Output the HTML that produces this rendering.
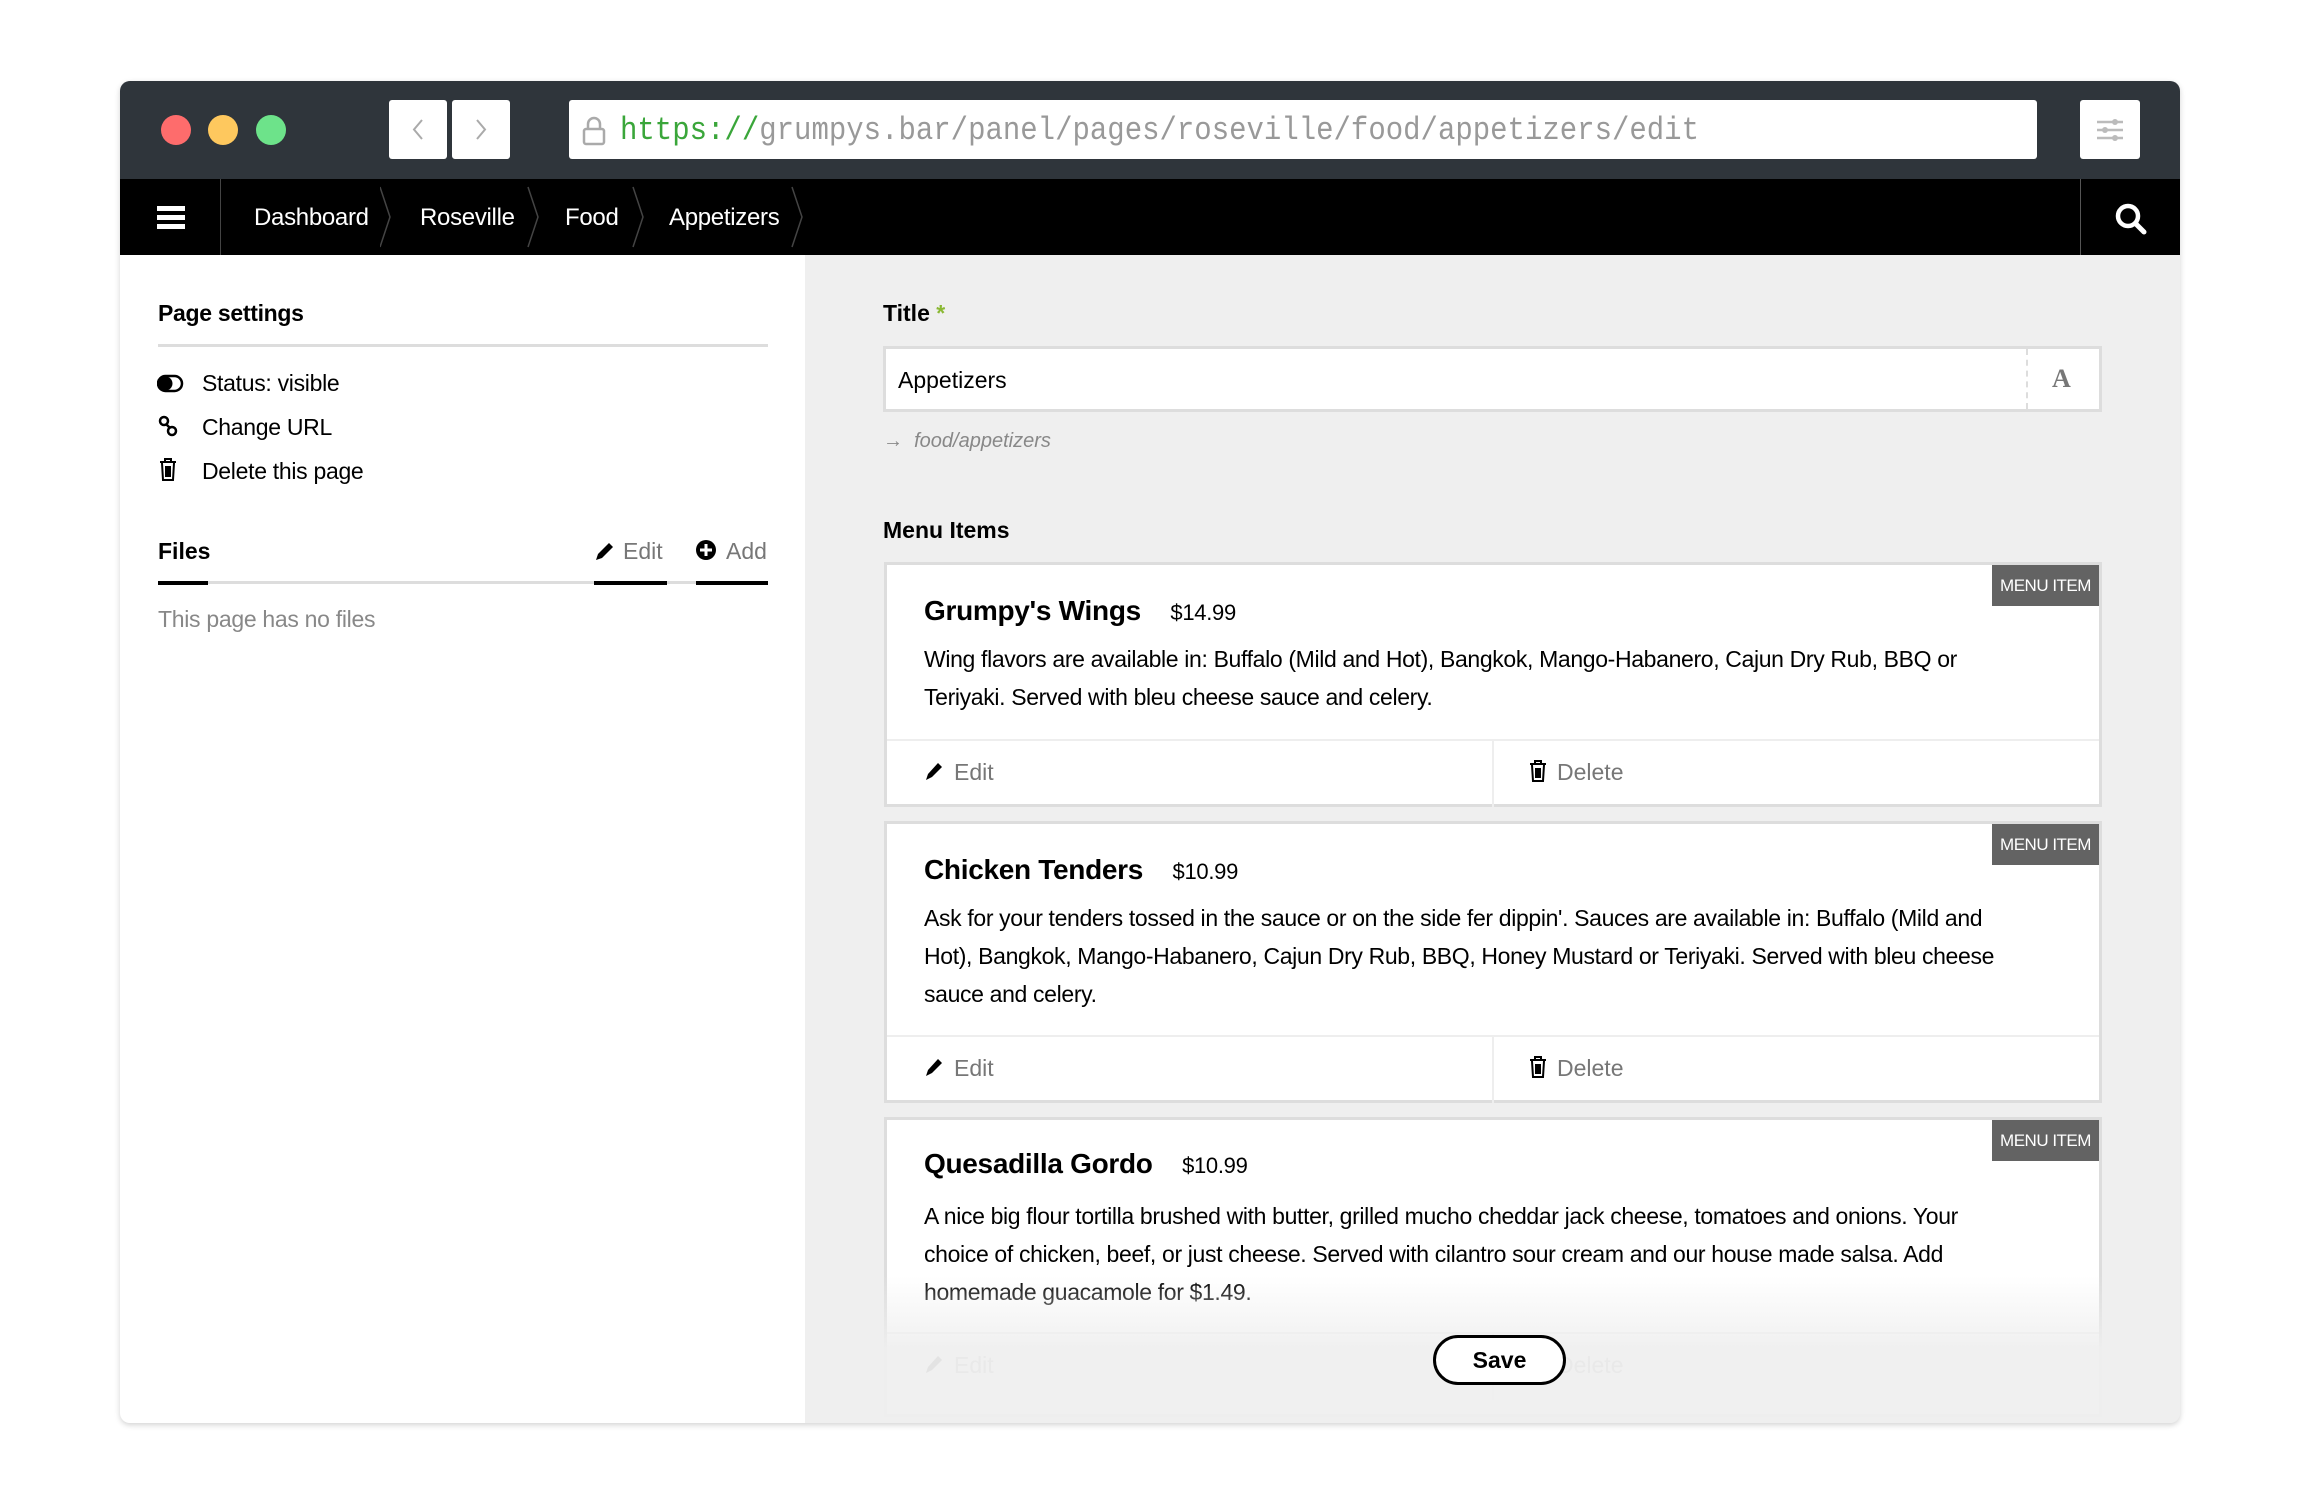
<!DOCTYPE html>
<html><head><meta charset="utf-8"><style>
*{box-sizing:border-box;margin:0;padding:0}
body{width:2300px;height:1504px;background:#fff;font-family:"Liberation Sans",sans-serif;position:relative;overflow:hidden;color:#000}
.abs{position:absolute}
.win{left:120px;top:81px;width:2060px;height:1342px;border-radius:10px;overflow:hidden;box-shadow:0 2px 6px rgba(0,0,0,.18);background:#efefef}
.tb{left:0;top:0;width:2060px;height:98px;background:#2f353b}
.dot{width:30px;height:30px;border-radius:50%;top:34px}
.btn{background:#fff;border-radius:3px;top:19px;height:59px;width:58px}
.nav{left:0;top:98px;width:2060px;height:76px;background:#000}
.crumb{top:98px;height:76px;line-height:78px;color:#fff;font-size:24px;letter-spacing:-.3px}
.left{left:0;top:174px;width:685px;height:1168px;background:#fff}
.card{background:#fff;border:3px solid #ddd;left:764px;width:1218px}
.badge{background:#636363;color:#fff;font-size:17px;line-height:41px;text-align:center;width:107px;height:41px;right:0;top:0;letter-spacing:-.5px}
.ct{font-size:28px;font-weight:bold;left:37px;letter-spacing:-.3px}
.pr{font-size:22px}
.desc{left:37px;font-size:23px;line-height:38px;white-space:nowrap;letter-spacing:-.35px}
.foot{left:0;right:0;height:66px;border-top:2px solid #eee;font-size:23px;color:#777}
.ic{display:inline-block;vertical-align:-2px;margin-right:10px}
</style></head><body>
<div class="abs win">
 <div class="abs tb"></div>
 <div class="abs dot" style="left:41px;background:#fe6c6c"></div>
 <div class="abs dot" style="left:88px;background:#fec85e"></div>
 <div class="abs dot" style="left:136px;background:#6de38a"></div>
 <div class="abs btn" style="left:269px"><svg width="58" height="59"><path d="M33 20l-8 9.5 8 9.5" stroke="#aaa" stroke-width="2" fill="none"/></svg></div>
 <div class="abs btn" style="left:332px"><svg width="58" height="59"><path d="M25 20l8 9.5-8 9.5" stroke="#aaa" stroke-width="2" fill="none"/></svg></div>
 <div class="abs" style="left:449px;top:19px;width:1468px;height:59px;background:#fff;border-radius:3px"></div>
 <svg class="abs" style="left:460px;top:34px" width="28" height="32"><path d="M8 14V9a6 6 0 0 1 12 0v5" stroke="#aaa" stroke-width="2.5" fill="none"/><rect x="4" y="14" width="20" height="15" rx="2" stroke="#aaa" stroke-width="2.5" fill="none"/></svg>
 <div class="abs" style="left:500px;top:29px;font-family:'Liberation Mono',monospace;font-size:29px;line-height:42px;color:#999;white-space:nowrap;transform:scaleY(1.12);transform-origin:left center"><span style="color:#3aa63a">https://</span>grumpys.bar/panel/pages/roseville/food/appetizers/edit</div>
 <div class="abs btn" style="left:1960px;width:60px"><svg width="60" height="59"><g stroke="#bbb" stroke-width="2.5"><path d="M17 22h26M17 30h26M17 38h26"/></g><g fill="#bbb"><circle cx="35" cy="22" r="3"/><circle cx="25" cy="30" r="3"/><circle cx="35" cy="38" r="3"/></g></svg></div>
 <div class="abs nav"></div>
 <svg class="abs" style="left:37px;top:125px" width="28" height="24"><g fill="#fff"><rect y="0" width="28" height="5"/><rect y="9" width="28" height="5"/><rect y="18" width="28" height="5"/></g></svg>
 <div class="abs" style="left:100px;top:98px;width:1px;height:76px;background:#444"></div>
 <div class="abs crumb" style="left:134px">Dashboard</div>
 <div class="abs crumb" style="left:300px">Roseville</div>
 <div class="abs crumb" style="left:445px">Food</div>
 <div class="abs crumb" style="left:549px">Appetizers</div>
 <svg class="abs" style="left:260px;top:98px" width="600" height="76"><g stroke="#444" stroke-width="1.5" fill="none"><path d="M0 8l10 30-10 30"/><path d="M148 8l10 30-10 30"/><path d="M253 8l10 30-10 30"/><path d="M412 8l10 30-10 30"/></g></svg>
 <div class="abs" style="left:1960px;top:98px;width:1px;height:76px;background:#555"></div>
 <svg class="abs" style="left:1995px;top:122px" width="34" height="34"><circle cx="13" cy="13" r="10" stroke="#fff" stroke-width="4.5" fill="none"/><path d="M21 21l8 8" stroke="#fff" stroke-width="5" stroke-linecap="round"/></svg>

 <div class="abs left"></div>
 <div class="abs" style="left:38px;top:219px;font-size:23px;font-weight:bold;letter-spacing:-.3px">Page settings</div>
 <div class="abs" style="left:38px;top:263px;width:610px;height:3px;background:#ddd"></div>
 <svg class="abs" style="left:37px;top:292px" width="28" height="24"><rect x="1" y="3" width="24" height="15" rx="7.5" stroke="#000" stroke-width="2.5" fill="none"/><circle cx="8.5" cy="10.5" r="7" fill="#000"/></svg>
 <div class="abs" style="left:82px;top:289px;font-size:23px;letter-spacing:-.3px">Status: visible</div>
 <svg class="abs" style="left:38px;top:333px" width="22" height="26"><g stroke="#000" stroke-width="2.5" fill="none"><circle cx="6" cy="7" r="4"/><circle cx="14" cy="17" r="4"/><path d="M8 10l4 4"/></g></svg>
 <div class="abs" style="left:82px;top:333px;font-size:23px;letter-spacing:-.3px">Change URL</div>
 <svg class="abs" style="left:39px;top:377px" width="18" height="24"><g stroke="#000" stroke-width="2" fill="none"><path d="M1 4h16M6 4V1h6v3M3 5l1 17h10l1-17M7 8v11M9 8v11M11 8v11"/></g></svg>
 <div class="abs" style="left:82px;top:377px;font-size:23px;letter-spacing:-.3px">Delete this page</div>
 <div class="abs" style="left:38px;top:457px;font-size:23px;font-weight:bold">Files</div>
 <svg class="abs" style="left:473px;top:459px" width="22" height="24"><path d="M3 20l2-6L16 3l4 4L9 18z M3 20l5-1" fill="#000"/></svg>
 <div class="abs" style="left:503px;top:457px;font-size:23px;color:#777">Edit</div>
 <svg class="abs" style="left:575px;top:458px" width="24" height="24"><circle cx="11" cy="11" r="10" fill="#000"/><path d="M11 5v12M5 11h12" stroke="#fff" stroke-width="3"/></svg>
 <div class="abs" style="left:606px;top:457px;font-size:23px;color:#777">Add</div>
 <div class="abs" style="left:38px;top:500px;width:610px;height:3px;background:#ddd"></div>
 <div class="abs" style="left:38px;top:500px;width:50px;height:4px;background:#000"></div>
 <div class="abs" style="left:474px;top:500px;width:73px;height:4px;background:#000"></div>
 <div class="abs" style="left:576px;top:500px;width:72px;height:4px;background:#000"></div>
 <div class="abs" style="left:38px;top:525px;font-size:23px;color:#888;letter-spacing:-.3px">This page has no files</div>

 <div class="abs" style="left:763px;top:219px;font-size:23px;font-weight:bold">Title <span style="color:#8ab833">*</span></div>
 <div class="abs" style="left:763px;top:265px;width:1219px;height:66px;background:#fff;border:3px solid #ddd"></div>
 <div class="abs" style="left:1906px;top:268px;width:0;height:60px;border-left:2px dashed #ddd"></div>
 <div class="abs" style="left:1932px;top:283px;font-family:'Liberation Serif',serif;font-weight:bold;font-size:26px;color:#777">A</div>
 <div class="abs" style="left:778px;top:286px;font-size:23px">Appetizers</div>
 <div class="abs" style="left:763px;top:349px;font-size:20px;color:#888;font-style:italic">→ &nbsp;food/appetizers</div>
 <div class="abs" style="left:763px;top:436px;font-size:23px;font-weight:bold">Menu Items</div>

 <div class="abs card" style="top:481px;height:245px">
  <div class="abs badge">MENU ITEM</div>
  <div class="abs ct" style="top:30px">Grumpy's Wings <span class="pr" style="font-weight:normal;margin-left:22px">$14.99</span></div>
  <div class="abs desc" style="top:75px">Wing flavors are available in: Buffalo (Mild and Hot), Bangkok, Mango-Habanero, Cajun Dry Rub, BBQ or<br>Teriyaki. Served with bleu cheese sauce and celery.</div>
  <div class="abs foot" style="top:174px"><div class="abs" style="left:37px;top:18px"><svg class="ic" width="20" height="22"><path d="M2 20l2-6L14 3l4 4L8 17z" fill="#000"/></svg>Edit</div><div class="abs" style="left:605px;top:0;width:2px;height:66px;background:#eee"></div><div class="abs" style="left:642px;top:18px"><svg class="ic" width="18" height="22"><g stroke="#000" stroke-width="2" fill="none"><path d="M1 4h16M6 4V1h6v3M3 5l1 16h10l1-16M7 8v10M9 8v10M11 8v10"/></g></svg>Delete</div></div>
 </div>
 <div class="abs card" style="top:740px;height:282px">
  <div class="abs badge">MENU ITEM</div>
  <div class="abs ct" style="top:30px">Chicken Tenders <span class="pr" style="font-weight:normal;margin-left:22px">$10.99</span></div>
  <div class="abs desc" style="top:75px">Ask for your tenders tossed in the sauce or on the side fer dippin'. Sauces are available in: Buffalo (Mild and<br>Hot), Bangkok, Mango-Habanero, Cajun Dry Rub, BBQ, Honey Mustard or Teriyaki. Served with bleu cheese<br>sauce and celery.</div>
  <div class="abs foot" style="top:211px"><div class="abs" style="left:37px;top:18px"><svg class="ic" width="20" height="22"><path d="M2 20l2-6L14 3l4 4L8 17z" fill="#000"/></svg>Edit</div><div class="abs" style="left:605px;top:0;width:2px;height:66px;background:#eee"></div><div class="abs" style="left:642px;top:18px"><svg class="ic" width="18" height="22"><g stroke="#000" stroke-width="2" fill="none"><path d="M1 4h16M6 4V1h6v3M3 5l1 16h10l1-16M7 8v10M9 8v10M11 8v10"/></g></svg>Delete</div></div>
 </div>
 <div class="abs card" style="top:1036px;height:300px">
  <div class="abs badge">MENU ITEM</div>
  <div class="abs ct" style="top:28px">Quesadilla Gordo <span class="pr" style="font-weight:normal;margin-left:22px">$10.99</span></div>
  <div class="abs desc" style="top:77px">A nice big flour tortilla brushed with butter, grilled mucho cheddar jack cheese, tomatoes and onions. Your<br>choice of chicken, beef, or just cheese. Served with cilantro sour cream and our house made salsa. Add<br>homemade guacamole for $1.49.</div>
  <div class="abs foot" style="top:212px"><div class="abs" style="left:37px;top:18px"><svg class="ic" width="20" height="22"><path d="M2 20l2-6L14 3l4 4L8 17z" fill="#000"/></svg>Edit</div><div class="abs" style="left:605px;top:0;width:2px;height:66px;background:#eee"></div><div class="abs" style="left:642px;top:18px"><svg class="ic" width="18" height="22"><g stroke="#000" stroke-width="2" fill="none"><path d="M1 4h16M6 4V1h6v3M3 5l1 16h10l1-16M7 8v10M9 8v10M11 8v10"/></g></svg>Delete</div></div>
 </div>
 <div class="abs" style="left:685px;top:1195px;width:1375px;height:147px;background:linear-gradient(rgba(239,239,239,0),rgba(239,239,239,.95) 50%)"></div>
 <div class="abs" style="left:1313px;top:1254px;width:133px;height:50px;border:3px solid #000;border-radius:25px;background:#fff;font-size:23px;font-weight:bold;text-align:center;line-height:44px">Save</div>
</div>
</body></html>
